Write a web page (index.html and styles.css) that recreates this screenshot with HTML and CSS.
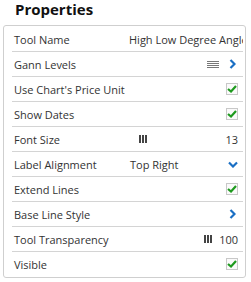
FILE: index.html
```html
<!DOCTYPE html>
<html lang="en">
<head>
    <meta charset="UTF-8">
    <title>Properties</title>
    <link rel="stylesheet" href="styles.css">
</head>
<body>
    <div class="title">Properties</div>

    <div class="panel">
        <div class="row">
            <span class="label">Tool Name</span>
            <span class="value clip">High Low Degree Angle</span>
        </div>
        <div class="row">
            <span class="label">Gann Levels</span>
            <span class="menu-icon"><i></i><i></i><i></i><i></i></span>
            <svg class="chev" width="7" height="10" viewBox="0 0 7 10"><path d="M1.5 1 L5.5 5 L1.5 9" fill="none" stroke="#1a6fc4" stroke-width="2.2"/></svg>
        </div>
        <div class="row">
            <span class="label">Use Chart's Price Unit</span>
            <span class="check"><svg width="10" height="8" viewBox="0 0 10 8"><path d="M1 4 L4 6.5 L9 1" fill="none" stroke="#1e9a1e" stroke-width="2.2"/></svg></span>
        </div>
        <div class="row">
            <span class="label">Show Dates</span>
            <span class="check"><svg width="10" height="8" viewBox="0 0 10 8"><path d="M1 4 L4 6.5 L9 1" fill="none" stroke="#1e9a1e" stroke-width="2.2"/></svg></span>
        </div>
        <div class="row">
            <span class="label">Font Size</span>
            <span class="value spread">
                <span class="bars"><i></i><i></i><i></i></span>
                <span class="num">13</span>
            </span>
        </div>
        <div class="row">
            <span class="label">Label Alignment</span>
            <span class="value spread">
                <span>Top Right</span>
                <svg class="chev-down" width="10" height="7" viewBox="0 0 10 7"><path d="M1 1.5 L5 5.5 L9 1.5" fill="none" stroke="#1a6fc4" stroke-width="2.2"/></svg>
            </span>
        </div>
        <div class="row">
            <span class="label">Extend Lines</span>
            <span class="check"><svg width="10" height="8" viewBox="0 0 10 8"><path d="M1 4 L4 6.5 L9 1" fill="none" stroke="#1e9a1e" stroke-width="2.2"/></svg></span>
        </div>
        <div class="row">
            <span class="label">Base Line Style</span>
            <svg class="chev" width="7" height="10" viewBox="0 0 7 10"><path d="M1.5 1 L5.5 5 L1.5 9" fill="none" stroke="#1a6fc4" stroke-width="2.2"/></svg>
        </div>
        <div class="row">
            <span class="label">Tool Transparency</span>
            <span class="bars"><i></i><i></i><i></i></span>
            <span class="num">100</span>
        </div>
        <div class="row">
            <span class="label">Visible</span>
            <span class="check"><svg width="10" height="8" viewBox="0 0 10 8"><path d="M1 4 L4 6.5 L9 1" fill="none" stroke="#1e9a1e" stroke-width="2.2"/></svg></span>
        </div>
    </div>
</body>
</html>
```

FILE: styles.css
```css
* {
    margin: 0;
    padding: 0;
    box-sizing: border-box;
}

body {
    font-family: 'Open Sans', 'Liberation Sans', sans-serif;
    font-size: 11px;
    color: #333;
    background: white;
}

.title {
    height: 25px;
    padding-left: 15px;
    font-size: 15px;
    font-weight: 700;
    color: #111;
    line-height: 19px;
}

.panel {
    margin-left: 3px;
    width: 243px;
    border: 1px solid #cfcfcf;
    border-radius: 3px;
    padding: 1px 2px 1px 8px;
}

.row {
    display: flex;
    align-items: center;
    height: 25px;
    padding: 0 5px 0 2px;
    border-bottom: 1px solid #d4d4d4;
}

.row:first-child {
    padding-right: 0;
}

.row:last-child {
    height: 24px;
    border-bottom: none;
}

.label {
    flex: 1;
    white-space: nowrap;
}

.value {
    width: 114px;
    white-space: nowrap;
}

.clip {
    overflow: hidden;
}

.spread {
    width: 108px;
    display: flex;
    align-items: center;
    justify-content: space-between;
}

.spread .bars {
    margin-left: 9px;
}

.menu-icon {
    display: flex;
    flex-direction: column;
    gap: 1px;
    width: 12px;
    margin-right: 10px;
}

.menu-icon i {
    display: block;
    height: 1px;
    background: #777;
}

.chev {
    margin-right: 2px;
}

.check {
    display: flex;
    align-items: center;
    justify-content: center;
    width: 12px;
    height: 12px;
    border: 1px solid #c8c8c8;
    background: #fafafa;
}

.bars {
    display: flex;
    gap: 1px;
    height: 8px;
}

.bars i {
    display: block;
    width: 2px;
    height: 8px;
    background: #444;
}

.row .bars + .num {
    margin-left: 7px;
}

.spread .num {
    margin-left: 0;
}
```
